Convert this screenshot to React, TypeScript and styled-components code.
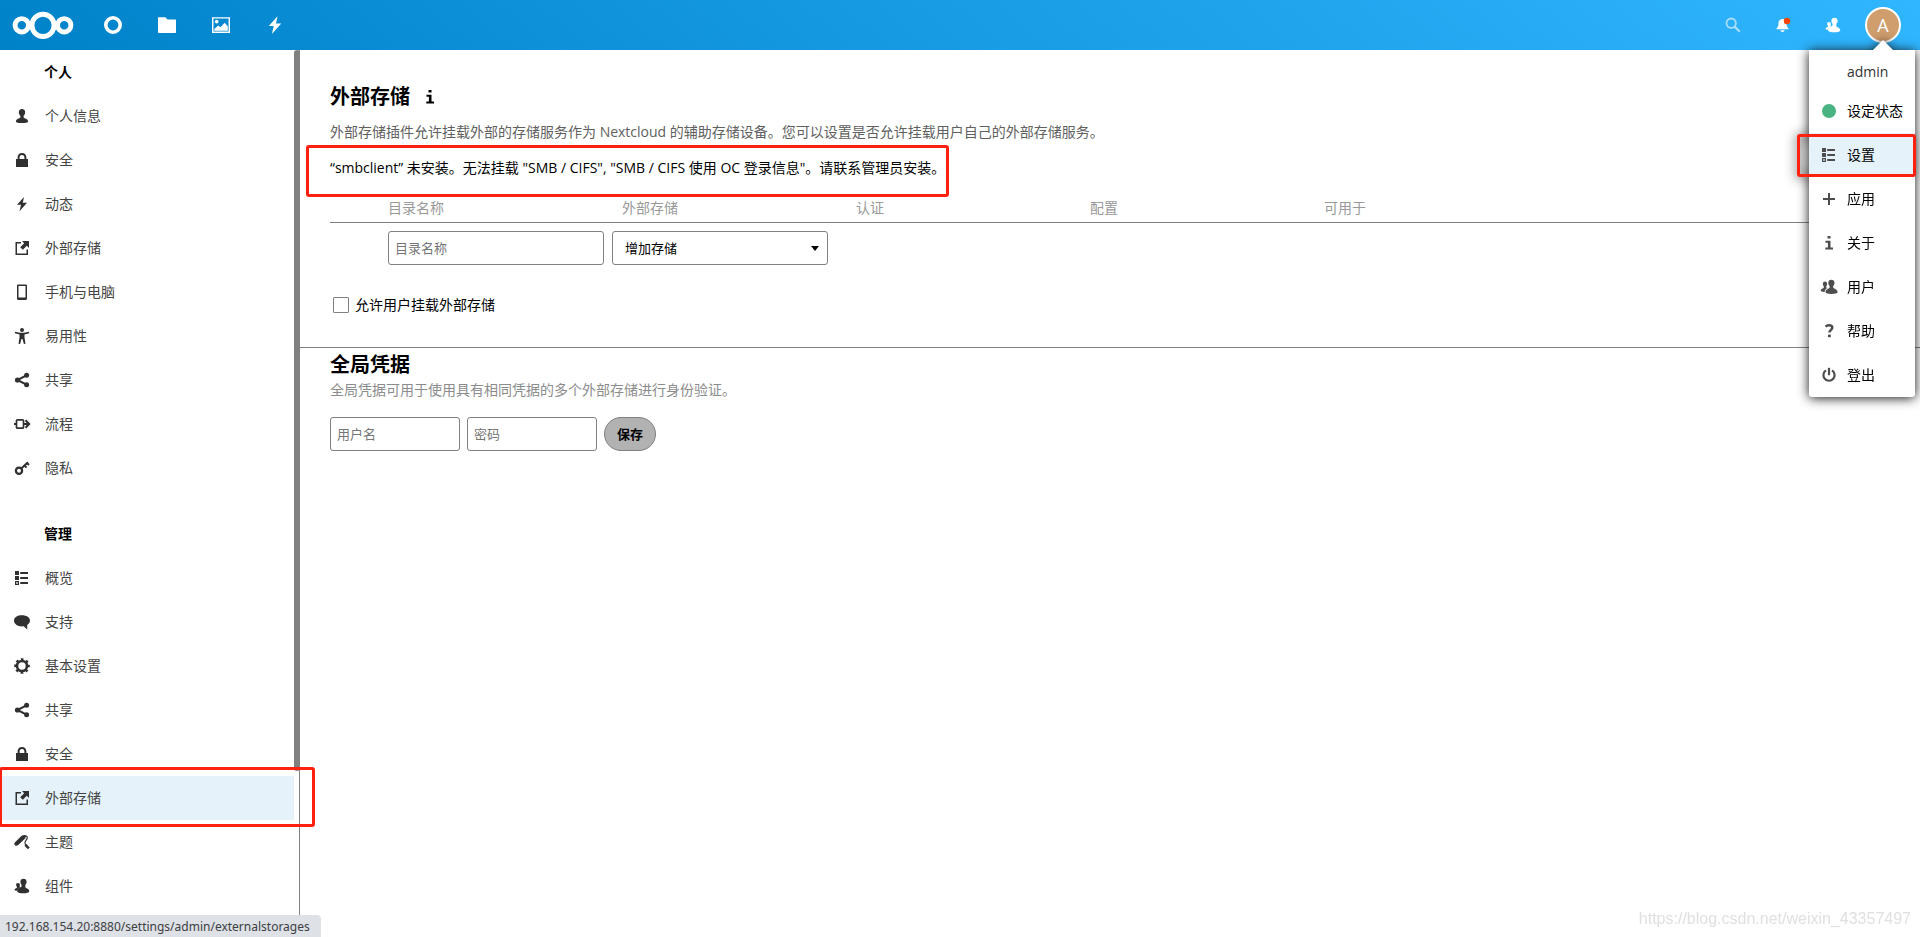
import React from 'react';
import styled, { createGlobalStyle, css } from 'styled-components';

const FONT = '"Open Sans", "Noto Sans CJK SC", sans-serif';
const LINE = '#808080';
const ACTIVE = '#e5f2fa';
const MARK = '#ff2010';

const GlobalStyle = createGlobalStyle`
  *, *::before, *::after { box-sizing: border-box; }
  body {
    margin: 0;
    background: #fff;
    color: #000;
    font-family: ${FONT};
    font-size: 14px;
    line-height: 20px;
    overflow: hidden;
  }
  button, input, select { font-family: inherit; font-size: 13px; margin: 0; }
  a { color: inherit; text-decoration: none; }
  ul { list-style: none; margin: 0; padding: 0; }
`;

/* ---------- icons ---------- */

const icons: Record<string, React.ReactNode> = {
  user: <path d="M8 1C5.900 1 4.800 2.300 4.800 4.200c0 1.600.7 2.800 1.600 3.600v1.600C5.600 10.400 2 10.800 2 13v.8C2 14.700 4.500 15 8 15s6-.3 6-1.200V13c0-2.200-3.600-2.600-4.400-3.600V7.800c.9-.8 1.600-2 1.600-3.600C11.200 2.300 10.100 1 8 1z" />,
  lock: <path d="M8 1C5.200 1 3.600 3 3.600 5.500V7H2v8h12V7h-1.600V5.500C12.400 3 10.800 1 8 1zm0 2c1.600 0 2.400 1.100 2.400 2.500V7H5.600V5.500C5.600 4.100 6.400 3 8 3z" />,
  bolt: <path d="M10 1L3 8.800h4L5.500 15.200 13 6.800H8.800z" />,
  external: (
    <>
      <path d="M7 2H1.500v13H14V9.500h-1.500v4h-9.500v-10H7z" />
      <path d="M8 1h7v7l-2.200-2.200-4 4L6.200 7.300l4-4z" />
    </>
  ),
  phone: <path fillRule="evenodd" d="M4.200.5h7.600c.7 0 1.200.5 1.200 1.200v13c0 .7-.5 1.200-1.200 1.200H4.200c-.7 0-1.200-.5-1.200-1.200v-13C3 1 3.500.5 4.200.5zM4.500 2v11.500h7V2z" />,
  person: (
    <>
      <circle cx="8" cy="2" r="2" />
      <path d="M1 3.800l5 .9h4l5-.9.2 1.500-4.700 1.100v3.200l1 6.100-1.600.3L8.500 11h-1L6.100 16l-1.600-.3 1-6.100V6.400L.8 5.300z" />
    </>
  ),
  share: (
    <>
      <path d="M3.500 8l9-4.700M3.500 8l9 4.700" stroke="currentColor" strokeWidth="2" />
      <circle cx="3.500" cy="8" r="2.600" />
      <circle cx="12.600" cy="3.300" r="2.500" />
      <circle cx="12.600" cy="12.700" r="2.500" />
    </>
  ),
  flow: (
    <>
      <rect x="2.500" y="3.800" width="7" height="8.400" rx="1" fill="none" stroke="currentColor" strokeWidth="1.700" />
      <path d="M0 7h2.500v2H0zM9.500 7h3.200l-1.900-1.900 1.500-1.500L16.600 8l-4.300 4.400-1.500-1.500L12.700 9H9.500z" />
    </>
  ),
  key: (
    <>
      <circle cx="5" cy="10.800" r="3.100" fill="none" stroke="currentColor" strokeWidth="2.300" />
      <path d="M7.200 8.600L14 2.200M10.500 5.300l2 2.300M13 3l2 2" stroke="currentColor" strokeWidth="2" fill="none" />
    </>
  ),
  list: (
    <>
      <path d="M1 1h4v4H1zM1 6h4v4H1zM6.200 2H14v2H6.200zM6.200 7H14v2H6.200zM6.200 12H14v2H6.200z" />
      <path d="M1.600 11.600h2.800v2.800H1.600z" fill="none" stroke="currentColor" strokeWidth="1.200" />
    </>
  ),
  comment: <path d="M8 1.200c4.600 0 8 2.200 8 5.400 0 1.800-1.100 3.400-2.800 4.400l.1 4.500-3.600-3.200c-.6.1-1.100.1-1.700.1-4.600 0-8-2.300-8-5.800S3.400 1.200 8 1.200z" />,
  gear: (
    <>
      <circle cx="8" cy="8" r="5" fill="none" stroke="currentColor" strokeWidth="2.600" />
      <circle cx="8" cy="8" r="6.800" fill="none" stroke="currentColor" strokeWidth="2" strokeDasharray="2.700 2.640" strokeDashoffset="1.350" />
    </>
  ),
  brush: (
    <>
      <path d="M11 1.200c-1.500-.6-3.200.4-4.400 1.600L1 8.300c-1.100 1.100-.8 2.800.3 3.300 1 .5 2.100.2 2.900-.6L10.600 5c1.100-1 1.700-3 .4-3.800z" />
      <path d="M10.500 1.800c2.800-.2 3.300 1.600 2.300 3.300-1 1.800-2.700 3-1.700 4.800l1.500 1.500" fill="none" stroke="currentColor" strokeWidth="1.200" />
      <path d="M11.400 10.800l3.400 3.600" stroke="currentColor" strokeWidth="2.600" />
    </>
  ),
  contacts: (
    <>
      <path d="M9.500.8C7.500.8 6.400 2 6.400 3.700c0 1.400.5 2.300 1.100 2.900v2C6.500 9.700 3.200 10.500 3.200 12.700v1c0 .9 2.500 1.500 6 1.500s6-.6 6-1.500v-1c0-1.700-2.700-2.400-3.800-3.300V6.600c.7-.6 1.200-1.500 1.200-2.900C12.600 2 11.500.8 9.500.8z" />
      <path d="M3.900 5C2.800 5 2.100 5.800 2.100 6.800c0 .9.400 1.500.8 1.900v1C2.300 10.300.6 10.500.6 11.700c0 .7.8 1 2.200 1.100.5-1.300 1.500-2.200 3-2.900V5.900C5.400 5.300 4.800 5 3.900 5z" />
    </>
  ),
  users: (
    <>
      <path d="M10.200.8C8.400.8 7.300 2 7.300 3.800c0 1.500.6 2.600 1.300 3.300v1.700C7.800 9.800 4.600 10.300 4.600 12.700v.8c0 .9 2.500 1.400 5.900 1.400s6-.5 6-1.400v-.8c0-2.400-3.500-2.900-4.300-3.900V7.100c.7-.7 1.300-1.800 1.300-3.300C13.500 2 12.200.8 10.200.8z" />
      <path d="M4 2.600C2.700 2.600 1.800 3.500 1.800 5c0 1 .4 1.800 1 2.300v1.400C2.200 9.400-.3 9.700-.3 11.600c0 .9 1.300 1.200 3.900 1.300.2-2 1.400-3.100 2.900-3.800L5.200 8.500V7.300c.6-.5 1-1.300 1-2.300 0-1.500-.8-2.400-2.200-2.400z" />
    </>
  ),
  plus: <path d="M7 2h2v5h5v2H9v5H7V9H2V7h5z" />,
  info: <path d="M6.500 1h3v2.600h-3zM4.500 5.800h5v6.600H12v2H4.300v-2h2.600V7.800H4.500z" />,
  question: (
    <>
      <path d="M4.600 3.600C5.400 2.700 6.500 2.200 8 2.200c2.100 0 3.300.9 3.300 2.500 0 2.100-2.900 2.300-2.900 4.900" fill="none" stroke="currentColor" strokeWidth="2.500" />
      <path d="M7 11.600h2.800v2.600H7z" />
    </>
  ),
  power: (
    <>
      <path d="M5 3.400a5.600 5.600 0 1 0 6 0" fill="none" stroke="currentColor" strokeWidth="2.200" />
      <path d="M6.900.8h2.200v7.400H6.900z" />
    </>
  ),
  ring: <circle cx="8" cy="8" r="6.400" fill="none" stroke="currentColor" strokeWidth="3.200" />,
  folder: <path d="M0 1.500c0-.4.200-.5.500-.5h6l2 2H15.500c.3 0 .5.200.5.500v11c0 .3-.2.500-.5.500H.5c-.3 0-.5-.2-.5-.5z" />,
  picture: (
    <>
      <path fillRule="evenodd" d="M0 1h16v14H0zM1.300 2.300v11.400h13.400V2.300z" />
      <circle cx="4.200" cy="5" r="1.600" />
      <path d="M2 13v-1.500L5.500 8.500 7.500 10 11.300 6 14 9v4z" />
    </>
  ),
  search: (
    <>
      <circle cx="6.200" cy="6.200" r="4.700" fill="none" stroke="currentColor" strokeWidth="1.800" />
      <path d="M9.600 9.600l5.200 5.200" stroke="currentColor" strokeWidth="2.200" />
    </>
  ),
  bell: (
    <>
      <path d="M7 2C4.500 2.300 3.500 4 3.500 6.500 3.500 9 3 9.700 1.500 11.500v.8h12v-.8C12 9.700 11.500 9 11.500 6.500 11.500 4 10.500 2.300 8 2z" />
      <path d="M5.500 13.300h4c0 1-.8 1.700-2 1.700s-2-.7-2-1.700z" />
      <circle cx="12" cy="4" r="3.200" fill="#ff4402" />
    </>
  ),
};

const Svg = styled.svg`
  display: block;
  flex: none;
`;

const Icon = ({ name, size = 16 }: { name: string; size?: number }) => (
  <Svg width={size} height={size} viewBox="0 0 16 16" fill="currentColor" overflow="visible" aria-hidden="true">
    {icons[name]}
  </Svg>
);

/* ---------- header ---------- */

const Header = styled.header`
  position: relative;
  z-index: 10;
  display: flex;
  justify-content: space-between;
  height: 50px;
  padding-right: 12px;
  background: linear-gradient(40deg, #0082c9 0%, #30b6ff 100%);
  color: #fff;
`;

const HeaderGroup = styled.nav`
  display: flex;
  align-items: center;
`;

const LogoLink = styled.a`
  width: 86px;
  padding-left: 12px;
`;

const AppLink = styled.a`
  display: flex;
  justify-content: center;
  width: 54px;
`;

const HeaderButton = styled.button<{ $dim?: boolean }>`
  display: flex;
  align-items: center;
  justify-content: center;
  width: 50px;
  height: 50px;
  padding: 0;
  border: 0;
  background: none;
  color: #fff;
  opacity: ${(p) => (p.$dim ? 0.6 : 1)};
`;

const Account = styled.div`
  position: relative;
`;

const Avatar = styled.span`
  display: flex;
  align-items: center;
  justify-content: center;
  width: 36px;
  height: 36px;
  border: 2px solid #fff;
  border-radius: 50%;
  background: #d09e6d;
  font-size: 18px;
`;

const Menu = styled.div`
  position: absolute;
  top: 50px;
  right: -7px;
  width: 106px;
  border-radius: 0 0 3px 3px;
  background: #fff;
  color: #000;
  filter: drop-shadow(0 1px 6px #111);

  &::before {
    content: '';
    position: absolute;
    right: 22px;
    bottom: 100%;
    border: 10px solid transparent;
    border-top: 0;
    border-bottom-color: #fff;
  }
`;

const MenuName = styled.div`
  height: 39px;
  padding: 12px 0 0 38px;
  color: #333;
`;

const MenuLink = styled.a<{ $active?: boolean }>`
  position: relative;
  display: flex;
  align-items: center;
  gap: 10px;
  height: 44px;
  padding-left: 12px;
  white-space: nowrap;
  background: ${(p) => (p.$active ? ACTIVE : 'transparent')};

  svg { color: #4d4d4d; }
`;

const StatusDot = styled.span`
  width: 14px;
  height: 14px;
  margin: 0 1px;
  border-radius: 50%;
  background: #49b382;
`;

/* ---------- highlight frames ---------- */

const Frame = styled.span`
  position: absolute;
  z-index: 3;
  border: 3px solid ${MARK};
  border-radius: 3px;
  pointer-events: none;
`;

const MenuFrame = styled(Frame)`
  inset: 1px -1px 0 -12px;
`;

const SideFrame = styled(Frame)`
  inset: -9px -21px -7px -1px;
`;

const NoticeFrame = styled(Frame)`
  inset: -13px -4px -19px -24px;
`;

/* ---------- page ---------- */

const Body = styled.div`
  display: flex;
  height: calc(100vh - 50px);
  overflow: hidden;
`;

const Sidebar = styled.aside`
  position: relative;
  z-index: 1;
  display: flex;
  flex: none;
  width: 300px;
`;

const SideNav = styled.nav`
  flex: 1;
`;

const Rail = styled.div`
  width: 6px;
  border-right: 1px solid ${LINE};
`;

const Thumb = styled.div`
  width: 6px;
  height: 81.3%;
  border-radius: 3px;
  background: ${LINE};
`;

const SideHeading = styled.h2<{ $spaced?: boolean }>`
  margin: ${(p) => (p.$spaced ? '22px' : '0')} 0 0;
  padding-left: 44px;
  font-size: 14px;
  font-weight: 700;
  line-height: 44px;
`;

const SideLink = styled.a<{ $active?: boolean }>`
  position: relative;
  display: flex;
  align-items: center;
  gap: 15px;
  height: 44px;
  padding-left: 14px;
  color: #444;
  ${(p) => p.$active && css`background: ${ACTIVE};`}

  svg { color: #303030; }
`;

const Content = styled.main`
  flex: 1;
  min-width: 0;
`;

const Section = styled.section<{ $first?: boolean }>`
  padding: ${(p) => (p.$first ? '30px 30px 32px' : '0 30px 30px')};
  border-bottom: ${(p) => (p.$first ? `1px solid ${LINE}` : '0')};
`;

const Title = styled.h2`
  display: flex;
  align-items: center;
  gap: 12px;
  margin: 0;
  padding-top: 2px;
  font-size: 20px;
  font-weight: 700;
  line-height: 30px;
`;

const Hint = styled.p<{ $light?: boolean }>`
  margin: ${(p) => (p.$light ? '0' : '10px')} 0 0;
  color: ${(p) => (p.$light ? '#8c8c8c' : '#606060')};
`;

const Notice = styled.p`
  position: relative;
  width: fit-content;
  margin: 16px 0 18px;
`;

const Table = styled.table`
  width: 100%;
  table-layout: fixed;
  border-collapse: collapse;

  th {
    height: 26px;
    padding: 0 0 2px 10px;
    border-bottom: 1px solid ${LINE};
    color: #999;
    font-weight: 400;
    text-align: left;
  }
  th:nth-child(2) { padding-left: 0; }
  td { padding: 8px 8px 0 0; }
`;

const Col = styled.col<{ $w?: number }>`
  width: ${(p) => (p.$w ? `${p.$w}px` : 'auto')};
`;

const Field = styled.input<{ $short?: boolean }>`
  display: block;
  width: ${(p) => (p.$short ? '130px' : '216px')};
  height: 34px;
  padding: 0 6px;
  border: 1px solid ${LINE};
  border-radius: 3px;
  background: #fff;
  color: #000;

  &::placeholder { color: #757575; opacity: 1; }
`;

const SelectBox = styled.div`
  position: relative;
  width: 216px;

  select {
    display: block;
    width: 100%;
    height: 34px;
    padding: 0 12px;
    border: 1px solid ${LINE};
    border-radius: 3px;
    appearance: none;
    background: #fff;
    color: #000;
  }
  svg {
    position: absolute;
    top: 15px;
    right: 9px;
    pointer-events: none;
  }
`;

const CheckRow = styled.label`
  display: flex;
  align-items: center;
  gap: 6px;
  width: fit-content;
  margin-top: 30px;
  padding-left: 3px;

  input {
    width: 16px;
    height: 16px;
    border: 1px solid ${LINE};
    border-radius: 1px;
    appearance: none;
    background: #fff;
  }
`;

const Credentials = styled.form`
  display: flex;
  gap: 7px;
  margin-top: 17px;
`;

const SaveButton = styled.button`
  height: 34px;
  padding: 0 12px;
  border: 1px solid ${LINE};
  border-radius: 17px;
  background: #b2b2b2;
  color: #000;
  font-weight: 700;
`;

const StatusBar = styled.div`
  position: fixed;
  z-index: 5;
  left: 0;
  bottom: 0;
  padding: 2px 11px 0 5px;
  border-radius: 0 4px 0 0;
  background: #dee1e6;
  color: #3c4043;
  font-family: "Noto Sans", sans-serif;
  font-size: 12px;
`;

const Watermark = styled.div`
  position: fixed;
  right: 9px;
  bottom: 8px;
  color: #e0e0e0;
  font-family: "Liberation Sans", Arial, sans-serif;
  font-size: 16px;
`;

const personal = [
  ['user', '个人信息'],
  ['lock', '安全'],
  ['bolt', '动态'],
  ['external', '外部存储'],
  ['phone', '手机与电脑'],
  ['person', '易用性'],
  ['share', '共享'],
  ['flow', '流程'],
  ['key', '隐私'],
];

const admin = [
  ['list', '概览'],
  ['comment', '支持'],
  ['gear', '基本设置'],
  ['share', '共享'],
  ['lock', '安全'],
  ['external', '外部存储'],
  ['brush', '主题'],
  ['contacts', '组件'],
];

const menu = [
  ['list', '设置'],
  ['plus', '应用'],
  ['info', '关于'],
  ['users', '用户'],
  ['question', '帮助'],
  ['power', '登出'],
];

const SideList = ({ items, active }: { items: string[][]; active?: string }) => (
  <ul>
    {items.map(([icon, label]) => (
      <li key={label}>
        <SideLink href="#" $active={label === active}>
          <Icon name={icon} />
          {label}
          {label === active && <SideFrame />}
        </SideLink>
      </li>
    ))}
  </ul>
);

export default function App() {
  return (
    <>
      <GlobalStyle />
      <Header>
        <HeaderGroup>
          <LogoLink href="#" aria-label="Nextcloud">
            <Svg width="62" height="30" viewBox="0 0 62 30" fill="none" stroke="#fff">
              <circle cx="31" cy="15.300" r="11.100" strokeWidth="5" />
              <circle cx="9.800" cy="15.300" r="6.700" strokeWidth="4.900" />
              <circle cx="52.200" cy="15.300" r="6.700" strokeWidth="4.900" />
            </Svg>
          </LogoLink>
          <AppLink href="#" aria-label="Dashboard"><Icon name="ring" size={18} /></AppLink>
          <AppLink href="#" aria-label="Files"><Icon name="folder" size={18} /></AppLink>
          <AppLink href="#" aria-label="Photos"><Icon name="picture" size={18} /></AppLink>
          <AppLink href="#" aria-label="Activity"><Icon name="bolt" size={20} /></AppLink>
        </HeaderGroup>
        <HeaderGroup>
          <HeaderButton $dim aria-label="Search"><Icon name="search" /></HeaderButton>
          <HeaderButton aria-label="Notifications"><Icon name="bell" /></HeaderButton>
          <HeaderButton aria-label="Contacts"><Icon name="contacts" /></HeaderButton>
          <Account>
            <HeaderButton aria-label="Account"><Avatar>A</Avatar></HeaderButton>
            <Menu>
              <MenuName>admin</MenuName>
              <MenuLink href="#"><StatusDot />设定状态</MenuLink>
              {menu.map(([icon, label], i) => (
                <MenuLink key={label} href="#" $active={i === 0}>
                  <Icon name={icon} />
                  {label}
                  {i === 0 && <MenuFrame />}
                </MenuLink>
              ))}
            </Menu>
          </Account>
        </HeaderGroup>
      </Header>
      <Body>
        <Sidebar>
          <SideNav>
            <SideHeading>个人</SideHeading>
            <SideList items={personal} />
            <SideHeading $spaced>管理</SideHeading>
            <SideList items={admin} active="外部存储" />
          </SideNav>
          <Rail><Thumb /></Rail>
        </Sidebar>
        <Content>
          <Section $first>
            <Title>外部存储 <Icon name="info" /></Title>
            <Hint>外部存储插件允许挂载外部的存储服务作为 Nextcloud 的辅助存储设备。您可以设置是否允许挂载用户自己的外部存储服务。</Hint>
            <Notice>
              “smbclient” 未安装。无法挂载 "SMB / CIFS", "SMB / CIFS 使用 OC 登录信息"。请联系管理员安装。
              <NoticeFrame />
            </Notice>
            <Table>
              <colgroup>
                <Col $w={58} /><Col $w={224} /><Col $w={234} /><Col $w={234} /><Col $w={234} /><Col />
              </colgroup>
              <thead>
                <tr>
                  <th />
                  <th>目录名称</th>
                  <th>外部存储</th>
                  <th>认证</th>
                  <th>配置</th>
                  <th>可用于</th>
                </tr>
              </thead>
              <tbody>
                <tr>
                  <td />
                  <td><Field type="text" placeholder="目录名称" aria-label="目录名称" /></td>
                  <td>
                    <SelectBox>
                      <select aria-label="外部存储"><option>增加存储</option></select>
                      <Svg width="8" height="5" viewBox="0 0 8 5"><path d="M0 0h8L4 5z" /></Svg>
                    </SelectBox>
                  </td>
                  <td /><td /><td />
                </tr>
              </tbody>
            </Table>
            <CheckRow><input type="checkbox" />允许用户挂载外部存储</CheckRow>
          </Section>
          <Section>
            <Title>全局凭据</Title>
            <Hint $light>全局凭据可用于使用具有相同凭据的多个外部存储进行身份验证。</Hint>
            <Credentials>
              <Field $short type="text" placeholder="用户名" aria-label="用户名" />
              <Field $short type="password" placeholder="密码" aria-label="密码" autoComplete="off" />
              <SaveButton type="button">保存</SaveButton>
            </Credentials>
          </Section>
        </Content>
      </Body>
      <StatusBar>192.168.154.20:8880/settings/admin/externalstorages</StatusBar>
      <Watermark>https://blog.csdn.net/weixin_43357497</Watermark>
    </>
  );
}
